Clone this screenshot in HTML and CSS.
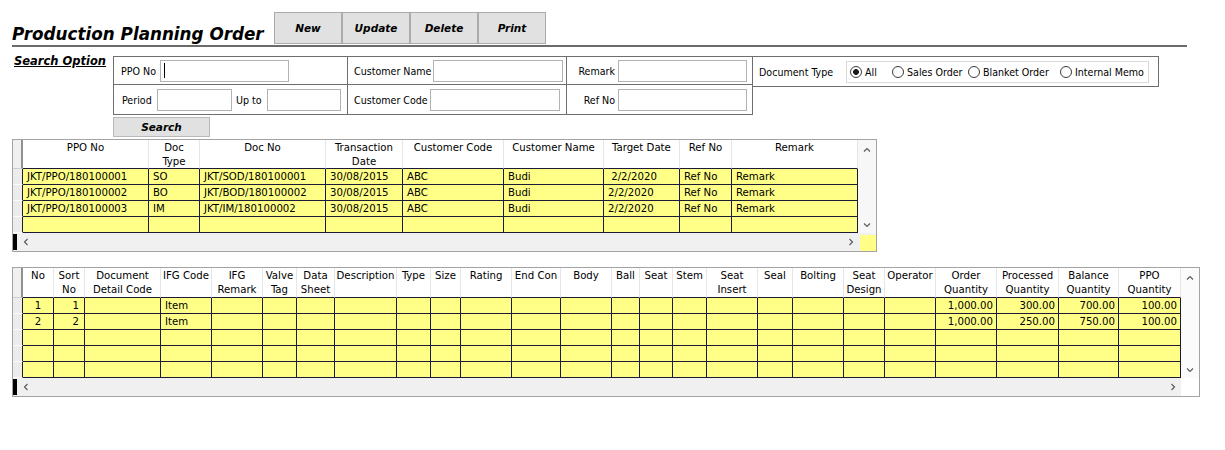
FILE: index.html
```html
<!DOCTYPE html>
<html lang="en">
<head>
<meta charset="utf-8">
<title>Production Planning Order</title>
<link rel="stylesheet" href="styles.css">
</head>
<body>
<div class="page">
  <header class="titlebar">
    <h1 class="title">Production Planning Order</h1>
    <div class="toolbar">
      <button class="tbtn">New</button><button class="tbtn">Update</button><button class="tbtn">Delete</button><button class="tbtn">Print</button>
    </div>
  </header>

  <section class="search">
    <div class="search-caption">Search Option</div>
    <div class="search-main">
      <div class="search-top">
        <div class="criteria">
          <div class="crit crit-a"><span class="lbl lbl-ppo">PPO No</span><span class="field f129"><span class="caret"></span></span></div>
          <div class="crit crit-b"><span class="lbl lbl-cname">Customer Name</span><span class="field f130"></span></div>
          <div class="crit crit-c"><span class="lbl lbl-rem">Remark</span><span class="field f129"></span></div>
          <div class="crit crit-a"><span class="lbl lbl-period">Period</span><span class="field f75"></span><span class="lbl lbl-upto">Up to</span><span class="field f74"></span></div>
          <div class="crit crit-b"><span class="lbl lbl-ccode">Customer Code</span><span class="field f130"></span></div>
          <div class="crit crit-c"><span class="lbl lbl-rem">Ref No</span><span class="field f129"></span></div>
        </div>
        <div class="doctype">
          <span class="lbl lbl-doc">Document Type</span>
          <div class="radios">
            <span class="radio-item ri-all"><span class="radio on"></span>All</span>
            <span class="radio-item ri-so"><span class="radio"></span>Sales Order</span>
            <span class="radio-item ri-bo"><span class="radio"></span>Blanket Order</span>
            <span class="radio-item"><span class="radio"></span>Internal Memo</span>
          </div>
        </div>
      </div>
      <button class="search-btn">Search</button>
    </div>
  </section>

  <div class="dgrid dgrid-top">
    <div class="cells cells-top">
      <div class="hc hc-ind"></div>
      <div class="hc">PPO No</div>
      <div class="hc">Doc<br>Type</div>
      <div class="hc">Doc No</div>
      <div class="hc">Transaction<br>Date</div>
      <div class="hc">Customer Code</div>
      <div class="hc">Customer Name</div>
      <div class="hc">Target Date</div>
      <div class="hc">Ref No</div>
      <div class="hc">Remark</div>

      <div class="ri"></div>
      <div class="dc">JKT/PPO/180100001</div>
      <div class="dc">SO</div>
      <div class="dc">JKT/SOD/180100001</div>
      <div class="dc">30/08/2015</div>
      <div class="dc">ABC</div>
      <div class="dc">Budi</div>
      <div class="dc pre"> 2/2/2020</div>
      <div class="dc">Ref No</div>
      <div class="dc">Remark</div>

      <div class="ri"></div>
      <div class="dc">JKT/PPO/180100002</div>
      <div class="dc">BO</div>
      <div class="dc">JKT/BOD/180100002</div>
      <div class="dc">30/08/2015</div>
      <div class="dc">ABC</div>
      <div class="dc">Budi</div>
      <div class="dc">2/2/2020</div>
      <div class="dc">Ref No</div>
      <div class="dc">Remark</div>

      <div class="ri"></div>
      <div class="dc">JKT/PPO/180100003</div>
      <div class="dc">IM</div>
      <div class="dc">JKT/IM/180100002</div>
      <div class="dc">30/08/2015</div>
      <div class="dc">ABC</div>
      <div class="dc">Budi</div>
      <div class="dc">2/2/2020</div>
      <div class="dc">Ref No</div>
      <div class="dc">Remark</div>

      <div class="ri"></div>
      <div class="dc"></div><div class="dc"></div><div class="dc"></div><div class="dc"></div><div class="dc"></div><div class="dc"></div><div class="dc"></div><div class="dc"></div><div class="dc"></div>
    </div>
    <div class="vscroll">
      <svg width="8" height="5" viewBox="0 0 8 5"><path d="M1 4.5 L4 1.5 L7 4.5" fill="none" stroke="#5c5c5c" stroke-width="1.2"/></svg>
      <svg width="8" height="5" viewBox="0 0 8 5"><path d="M1 0.5 L4 3.5 L7 0.5" fill="none" stroke="#5c5c5c" stroke-width="1.2"/></svg>
    </div>
    <div class="hscroll hscroll-top">
      <div class="hs-left"><span class="hs-bar"></span><svg width="5" height="8" viewBox="0 0 5 8"><path d="M4.5 1 L1.5 4 L4.5 7" fill="none" stroke="#5c5c5c" stroke-width="1.2"/></svg></div>
      <svg width="5" height="8" viewBox="0 0 5 8"><path d="M0.5 1 L3.5 4 L0.5 7" fill="none" stroke="#5c5c5c" stroke-width="1.2"/></svg>
    </div>
    <div class="corner corner-yellow"></div>
  </div>

  <div class="dgrid dgrid-bottom">
    <div class="cells cells-bottom">
      <div class="hc hc-ind"></div>
      <div class="hc">No</div>
      <div class="hc">Sort<br>No</div>
      <div class="hc">Document<br>Detail Code</div>
      <div class="hc">IFG Code</div>
      <div class="hc">IFG<br>Remark</div>
      <div class="hc">Valve<br>Tag</div>
      <div class="hc">Data<br>Sheet</div>
      <div class="hc">Description</div>
      <div class="hc">Type</div>
      <div class="hc">Size</div>
      <div class="hc">Rating</div>
      <div class="hc">End Con</div>
      <div class="hc">Body</div>
      <div class="hc">Ball</div>
      <div class="hc">Seat</div>
      <div class="hc">Stem</div>
      <div class="hc">Seat<br>Insert</div>
      <div class="hc">Seal</div>
      <div class="hc">Bolting</div>
      <div class="hc">Seat<br>Design</div>
      <div class="hc">Operator</div>
      <div class="hc">Order<br>Quantity</div>
      <div class="hc">Processed<br>Quantity</div>
      <div class="hc">Balance<br>Quantity</div>
      <div class="hc">PPO<br>Quantity</div>

      <div class="ri"></div>
      <div class="dc ctr">1</div><div class="dc sort">1</div><div class="dc"></div><div class="dc">Item</div>
      <div class="dc"></div><div class="dc"></div><div class="dc"></div><div class="dc"></div><div class="dc"></div><div class="dc"></div>
      <div class="dc"></div><div class="dc"></div><div class="dc"></div><div class="dc"></div><div class="dc"></div><div class="dc"></div>
      <div class="dc"></div><div class="dc"></div><div class="dc"></div><div class="dc"></div><div class="dc"></div>
      <div class="dc num">1,000.00</div><div class="dc num">300.00</div><div class="dc num">700.00</div><div class="dc num">100.00</div>

      <div class="ri"></div>
      <div class="dc ctr">2</div><div class="dc sort">2</div><div class="dc"></div><div class="dc">Item</div>
      <div class="dc"></div><div class="dc"></div><div class="dc"></div><div class="dc"></div><div class="dc"></div><div class="dc"></div>
      <div class="dc"></div><div class="dc"></div><div class="dc"></div><div class="dc"></div><div class="dc"></div><div class="dc"></div>
      <div class="dc"></div><div class="dc"></div><div class="dc"></div><div class="dc"></div><div class="dc"></div>
      <div class="dc num">1,000.00</div><div class="dc num">250.00</div><div class="dc num">750.00</div><div class="dc num">100.00</div>

      <div class="ri"></div>
      <div class="dc"></div><div class="dc"></div><div class="dc"></div><div class="dc"></div><div class="dc"></div>
      <div class="dc"></div><div class="dc"></div><div class="dc"></div><div class="dc"></div><div class="dc"></div>
      <div class="dc"></div><div class="dc"></div><div class="dc"></div><div class="dc"></div><div class="dc"></div>
      <div class="dc"></div><div class="dc"></div><div class="dc"></div><div class="dc"></div><div class="dc"></div>
      <div class="dc"></div><div class="dc"></div><div class="dc"></div><div class="dc"></div><div class="dc"></div>

      <div class="ri"></div>
      <div class="dc"></div><div class="dc"></div><div class="dc"></div><div class="dc"></div><div class="dc"></div>
      <div class="dc"></div><div class="dc"></div><div class="dc"></div><div class="dc"></div><div class="dc"></div>
      <div class="dc"></div><div class="dc"></div><div class="dc"></div><div class="dc"></div><div class="dc"></div>
      <div class="dc"></div><div class="dc"></div><div class="dc"></div><div class="dc"></div><div class="dc"></div>
      <div class="dc"></div><div class="dc"></div><div class="dc"></div><div class="dc"></div><div class="dc"></div>

      <div class="ri"></div>
      <div class="dc"></div><div class="dc"></div><div class="dc"></div><div class="dc"></div><div class="dc"></div>
      <div class="dc"></div><div class="dc"></div><div class="dc"></div><div class="dc"></div><div class="dc"></div>
      <div class="dc"></div><div class="dc"></div><div class="dc"></div><div class="dc"></div><div class="dc"></div>
      <div class="dc"></div><div class="dc"></div><div class="dc"></div><div class="dc"></div><div class="dc"></div>
      <div class="dc"></div><div class="dc"></div><div class="dc"></div><div class="dc"></div><div class="dc"></div>
    </div>
    <div class="vscroll vscroll-light">
      <svg width="8" height="5" viewBox="0 0 8 5"><path d="M1 4.5 L4 1.5 L7 4.5" fill="none" stroke="#5c5c5c" stroke-width="1.2"/></svg>
      <svg width="8" height="5" viewBox="0 0 8 5"><path d="M1 0.5 L4 3.5 L7 0.5" fill="none" stroke="#5c5c5c" stroke-width="1.2"/></svg>
    </div>
    <div class="hscroll hscroll-bottom">
      <div class="hs-left"><span class="hs-bar"></span><svg width="5" height="8" viewBox="0 0 5 8"><path d="M4.5 1 L1.5 4 L4.5 7" fill="none" stroke="#5c5c5c" stroke-width="1.2"/></svg></div>
      <svg width="5" height="8" viewBox="0 0 5 8"><path d="M0.5 1 L3.5 4 L0.5 7" fill="none" stroke="#5c5c5c" stroke-width="1.2"/></svg>
    </div>
    <div class="corner"></div>
  </div>
</div>
</body>
</html>
```

FILE: styles.css
```css
html, body {
  margin: 0;
  background: #ffffff;
}

body {
  font-family: "DejaVu Sans Condensed", "DejaVu Sans", "Liberation Sans", sans-serif;
  font-stretch: condensed;
  font-size: 10.6px;
  color: #000000;
}

.page {
  padding: 0 12px;
}

/* ---------- title bar ---------- */
.titlebar {
  display: flex;
  align-items: flex-end;
  width: 1175px;
  padding: 12px 0 1px;
  border-bottom: 2px solid #6b6b6b;
}

.title {
  margin: 0;
  width: 262px;
  flex: none;
  font-family: "DejaVu Sans", sans-serif;
  font-stretch: normal;
  font-weight: bold;
  font-style: italic;
  font-size: 16.8px;
  line-height: 20px;
  white-space: nowrap;
}

.toolbar {
  display: flex;
}

.tbtn {
  width: 68px;
  height: 32px;
  margin: 0;
  padding: 0;
  background: #e1e1e1;
  border: 1px solid #ababab;
  color: #000000;
  font-family: "DejaVu Sans", sans-serif;
  font-stretch: normal;
  font-weight: bold;
  font-style: italic;
  font-size: 10.5px;
}

/* ---------- search ---------- */
.search {
  display: flex;
  align-items: flex-start;
  margin-top: 9px;
}

.search-caption {
  width: 101px;
  flex: none;
  box-sizing: border-box;
  padding-left: 2px;
  margin-top: -2px;
  font-family: "DejaVu Sans", sans-serif;
  font-stretch: normal;
  font-weight: bold;
  font-style: italic;
  font-size: 11.5px;
  line-height: 14px;
  text-decoration: underline;
}

.search-main {
  display: flex;
  flex-direction: column;
  align-items: flex-start;
  gap: 2px;
}

.search-top {
  display: flex;
  align-items: flex-start;
}

.criteria {
  display: grid;
  grid-template-columns: 234px 219px 186px;
  grid-template-rows: 28px 30px;
  border-left: 1px solid #6e6e6e;
  border-top: 1px solid #6e6e6e;
}

.crit {
  display: flex;
  align-items: center;
  gap: 3px;
  box-sizing: border-box;
  border-right: 1px solid #6e6e6e;
  border-bottom: 1px solid #6e6e6e;
}

.crit-a { padding-left: 7px; }
.crit-b { padding-left: 6px; }
.crit-c { padding-left: 0; }

.lbl {
  flex: none;
  white-space: nowrap;
}

.lbl-ppo { width: 36px; }
.lbl-period { width: 33px; padding-left: 1px; box-sizing: border-box; }
.lbl-upto { width: 29px; padding-left: 1px; box-sizing: border-box; }
.lbl-cname { width: 76px; }
.lbl-ccode { width: 73px; }
.lbl-rem { width: 48px; text-align: right; }
.lbl-doc { width: 84px; }

.field {
  flex: none;
  display: flex;
  align-items: center;
  height: 22px;
  box-sizing: border-box;
  border: 1px solid #b2b2b2;
  background: #ffffff;
}

.f129 { width: 129px; }
.f130 { width: 130px; }
.f75 { width: 75px; }
.f74 { width: 74px; }

.caret {
  width: 1px;
  height: 15px;
  margin-left: 3px;
  background: #000000;
}

.doctype {
  display: flex;
  align-items: center;
  gap: 3px;
  width: 406px;
  height: 31px;
  box-sizing: border-box;
  padding-left: 6px;
  border: 1px solid #6e6e6e;
  border-left: none;
}

.radios {
  display: flex;
  align-items: center;
  width: 303px;
  height: 22px;
  box-sizing: border-box;
  padding-left: 3px;
  border: 1px solid #dadada;
}

.radio-item {
  display: flex;
  align-items: center;
  gap: 3px;
  flex: none;
  white-space: nowrap;
}

.ri-all { width: 42px; }
.ri-so { width: 76px; }
.ri-bo { width: 92px; }

.radio {
  flex: none;
  width: 12px;
  height: 12px;
  box-sizing: border-box;
  border: 1px solid #3a3a3a;
  border-radius: 50%;
  background: #ffffff;
}

.radio.on {
  background: radial-gradient(circle, #1a1a1a 0 2.6px, #ffffff 3.2px);
}

.search-btn {
  width: 97px;
  height: 20px;
  margin: 0;
  padding: 0;
  background: #e1e1e1;
  border: 1px solid #b9b9b9;
  color: #000000;
  font-family: "DejaVu Sans", sans-serif;
  font-stretch: normal;
  font-weight: bold;
  font-style: italic;
  font-size: 10.5px;
}

/* ---------- data grids ---------- */
.dgrid {
  display: grid;
  grid-template-columns: auto 18px;
  grid-template-rows: auto 18px;
  width: max-content;
  border: 1px solid #a3a3a3;
  margin-top: 2px;
  font-size: 11.3px;
}

.dgrid-bottom {
  margin-top: 15px;
}

.cells {
  display: grid;
}

.cells-top {
  grid-template-columns: 10px 126px 51px 126px 77px 101px 100px 76px 52px 126px;
  grid-template-rows: 29px repeat(4, 16px);
}

.cells-bottom {
  grid-template-columns: 10px 31px 31px 76px 51px 51px 34px 38px 62px 34px 30px 51px 49px 51px 28px 33px 34px 51px 35px 51px 41px 51px 61px 62px 60px 62px;
  grid-template-rows: 30px repeat(5, 16px);
}

.hc {
  box-sizing: border-box;
  background: #ffffff;
  border-right: 1px solid #e6e6e6;
  border-bottom: 1px solid #1b1b36;
  padding-top: 1px;
  text-align: center;
  line-height: 14px;
  white-space: nowrap;
  overflow: hidden;
}

.hc-ind {
  background: #f0f0f0;
  border-right: 2px solid #8f8f8f;
  border-bottom: 1px solid #cfcfcf;
}

.ri {
  box-sizing: border-box;
  background: #ececec;
  border-right: 1px solid #1b1b36;
  border-bottom: 1px solid #fbfbfb;
}

.dc {
  box-sizing: border-box;
  background: #ffff88;
  border-right: 1px solid #1b1b36;
  border-bottom: 1px solid #1b1b36;
  padding: 0 3px 0 4px;
  line-height: 15px;
  white-space: nowrap;
  overflow: hidden;
}

.dc.pre { white-space: pre; }
.dc.ctr { text-align: center; padding: 0; }
.dc.sort { text-align: right; padding-right: 5px; }
.dc.num { text-align: right; padding-right: 3px; }

.vscroll {
  grid-column: 2;
  grid-row: 1;
  display: flex;
  flex-direction: column;
  justify-content: space-between;
  align-items: center;
  padding: 7px 0 5px;
  background: #f7f7f7;
}

.vscroll-light {
  background: #fbfbfb;
}

.hscroll {
  grid-column: 1;
  grid-row: 2;
  display: flex;
  align-items: center;
  justify-content: space-between;
  background: #f0f0f0;
  padding-right: 4px;
}

.hscroll-bottom {
  padding-right: 5px;
}

.hs-left {
  display: flex;
  align-items: center;
  gap: 6px;
}

.hs-bar {
  width: 4px;
  height: 16px;
  background: #000000;
}

.corner {
  grid-column: 2;
  grid-row: 2;
  background: #ffffff;
}

.corner-yellow {
  box-sizing: border-box;
  background: #ffff88;
  border-top: 2px solid #f0f0f0;
  border-left: 2px solid #f0f0f0;
}
```
